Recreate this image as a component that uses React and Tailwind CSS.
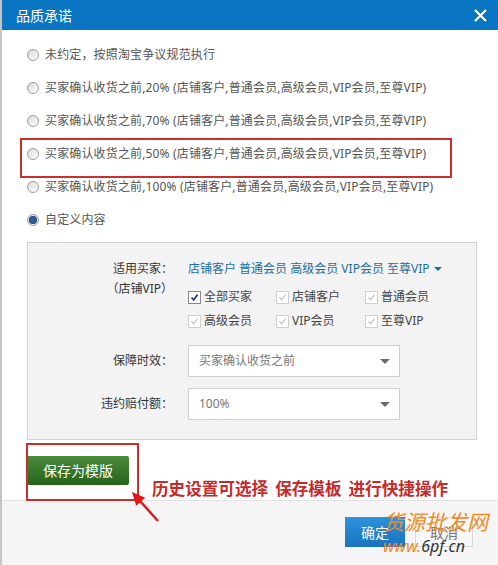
import React from 'react';

const options = [
  { label: '未约定，按照淘宝争议规范执行' },
  { label: '买家确认收货之前,20% (店铺客户,普通会员,高级会员,VIP会员,至尊VIP)' },
  { label: '买家确认收货之前,70% (店铺客户,普通会员,高级会员,VIP会员,至尊VIP)' },
  { label: '买家确认收货之前,50% (店铺客户,普通会员,高级会员,VIP会员,至尊VIP)' },
  { label: '买家确认收货之前,100% (店铺客户,普通会员,高级会员,VIP会员,至尊VIP)' },
  { label: '自定义内容', checked: true },
];

const buyers = [
  { label: '全部买家', active: true },
  { label: '店铺客户' },
  { label: '普通会员' },
  { label: '高级会员' },
  { label: 'VIP会员' },
  { label: '至尊VIP' },
];

const Radio = ({ checked }) => (
  <span className="w-3 h-3 rounded-full border border-[#9c9c9c] bg-gradient-to-br from-[#d9d9d9] to-white flex items-center justify-center shrink-0">
    {checked && <span className="w-[6px] h-[6px] rounded-full bg-[#2c5f9e] ring-1 ring-[#1d3f6e]" />}
  </span>
);

const Checkbox = ({ active }) => (
  <span
    className={`w-[13px] h-[13px] border bg-white flex items-center justify-center shrink-0 ${
      active ? 'border-[#8a8a8a]' : 'border-[#cfcfcf]'
    }`}
  >
    <svg width="9" height="9" viewBox="0 0 9 9" fill="none">
      <path
        d="M1.5 4.5 L3.6 6.8 L7.6 1.6"
        stroke={active ? '#2d3f86' : '#c4c4c4'}
        strokeWidth={active ? 1.8 : 1.3}
      />
    </svg>
  </span>
);

const Select = ({ value }) => (
  <div className="w-[212px] h-8 border border-[#cfcfcf] bg-white flex items-center justify-between pl-[10px] pr-[9px] text-[12px] text-[#777]">
    <span>{value}</span>
    <span className="w-0 h-0 border-l-[5px] border-r-[5px] border-t-[5px] border-l-transparent border-r-transparent border-t-[#6a6a6a]" />
  </div>
);

export default function App() {
  return (
    <div className="relative w-[498px] h-[565px] border-l-2 border-[#c4c4c4] flex flex-col overflow-hidden bg-white font-['Noto_Sans','Noto_Sans_CJK_SC',sans-serif]">
      {/* Header */}
      <div className="h-[30px] bg-[#0a75c2] flex items-center justify-between pl-[14px] pr-[11px] shrink-0">
        <span className="text-white text-[14px]">品质承诺</span>
        <svg width="13" height="13" viewBox="0 0 13 13">
          <path d="M1 1 L12 12 M12 1 L1 12" stroke="white" strokeWidth="2.2" />
        </svg>
      </div>

      {/* Body */}
      <div className="flex-1 pl-[25px] pt-2">
        {options.map((opt) => (
          <label key={opt.label} className="h-[33px] flex items-center gap-[6px] text-[12px] tracking-[0.15px] text-[#555]">
            <Radio checked={opt.checked} />
            <span>{opt.label}</span>
          </label>
        ))}

        <div className="mt-[6px] w-[450px] h-[198px] border border-[#d2d2d2] bg-[#f3f3f3] pt-4 grid grid-cols-[145px_212px] gap-x-[15px] content-start text-[12px] text-[#333]">
          <div className="text-right leading-5">
            <div>适用买家：</div>
            <div>（店铺VIP）</div>
          </div>
          <div>
            <div className="leading-5 text-[#1f6d9c] flex items-center gap-[4px] whitespace-nowrap">
              <span>店铺客户 普通会员 高级会员 VIP会员 至尊VIP</span>
              <span className="w-0 h-0 border-l-[4px] border-r-[4px] border-t-[4px] border-l-transparent border-r-transparent border-t-[#1f6d9c]" />
            </div>
            <div className="mt-[6px] grid grid-cols-[88px_89px_88px] w-[270px]">
              {buyers.map((b) => (
                <div key={b.label} className="h-6 flex items-center gap-[3px] text-[#444]">
                  <Checkbox active={b.active} />
                  <span>{b.label}</span>
                </div>
              ))}
            </div>
          </div>

          <div className="mt-3 h-8 flex items-center justify-end">保障时效：</div>
          <div className="mt-3">
            <Select value="买家确认收货之前" />
          </div>

          <div className="mt-[11px] h-8 flex items-center justify-end">违约赔付额：</div>
          <div className="mt-[11px]">
            <Select value="100%" />
          </div>
        </div>

        <button className="mt-4 w-[102px] h-[29px] rounded-[2px] bg-gradient-to-b from-[#4b8c3c] to-[#25631a] text-white text-[14px]">
          保存为模版
        </button>
      </div>

      {/* Footer */}
      <div className="h-[65px] shrink-0 border-t border-[#e2e2e2] bg-[#f5f5f5] flex justify-end items-start pt-4 pr-[25px] gap-[10px]">
        <button className="w-[60px] h-[30px] bg-gradient-to-b from-[#2d93dc] to-[#1a72bd] text-white text-[14px]">确定</button>
        <button className="w-[58px] h-[30px] border border-[#d8d8d8] bg-[#f8f8f8] text-[#777] text-[14px]">取消</button>
      </div>

      {/* Annotations */}
      <div className="absolute left-[18px] top-[138px] w-[432px] h-[40px] border-2 border-[#c9302c]" />
      <div className="absolute left-[24px] top-[443px] w-[113px] h-[58px] border-2 border-[#c9302c]" />
      <div className="absolute left-[150px] top-[479px] leading-5 text-[16.6px] font-bold text-[#c62a2a] flex gap-[7px] whitespace-nowrap">
        <span>历史设置可选择</span>
        <span>保存模板</span>
        <span>进行快捷操作</span>
      </div>
      <svg className="absolute left-[118px] top-[485px]" width="45" height="42" viewBox="0 0 45 42">
        <path d="M20 16 L38 36" stroke="#d42020" strokeWidth="2.5" />
        <path d="M12 7 L16.2 20.7 L25.2 12.7 Z" fill="#e01818" />
      </svg>

      {/* Watermark */}
      <div className="absolute left-[381px] top-[509px] text-[21px] leading-[26px] text-[#f08a24] italic">货源批发网</div>
      <div className="absolute left-[381px] top-[536px] text-[16px] leading-5 italic">
        <span className="text-[#f08a24]">www.</span>
        <span className="text-[#333]">6pf.cn</span>
      </div>
    </div>
  );
}
